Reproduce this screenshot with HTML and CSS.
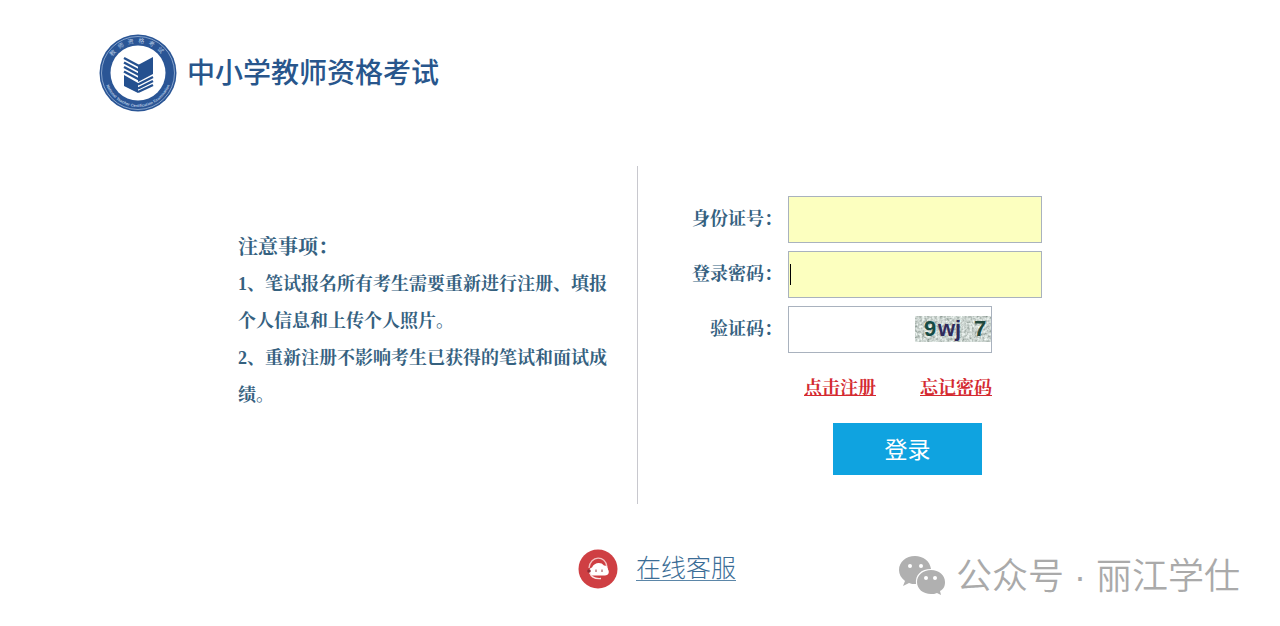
FILE: index.html
```html
<!DOCTYPE html>
<html lang="zh-CN">

<head>
  <meta charset="UTF-8" />
  <meta name="viewport" content="width=device-width, initial-scale=1.0" />
  <title>中小学教师资格考试</title>
  <link rel="stylesheet" href="styles.css">
</head>

<body>
  <header class="header">
    <svg class="logo" viewBox="0 0 78 78" aria-hidden="true">
      <defs>
        <path id="arc-top" d="M9 39a30 30 0 0 1 60 0" />
        <path id="arc-bottom" d="M5 39a34 34 0 0 0 68 0" />
      </defs>
      <circle cx="39" cy="39" r="38.5" fill="#2a5595" />
      <circle cx="39" cy="39" r="36.5" fill="none" stroke="#86a3cb" stroke-width="1" />
      <circle cx="39" cy="39" r="27.5" fill="#fff" />
      <text class="logo-cn"><textPath href="#arc-top" startOffset="50%" text-anchor="middle">教师资格考试</textPath></text>
      <text class="logo-en"><textPath href="#arc-bottom" startOffset="50%" text-anchor="middle">National Teacher Certification Examination</textPath></text>
      <g fill="#24508f">
        <path d="M39 31l15-8v17l-15 8z" />
        <path d="M25 41l14 8v10l-14-7z" />
      </g>
      <g stroke="#24508f" stroke-width="2.4" fill="none">
        <path d="M25 24l15 8M25 28.500l15 8M25 33l15 8M25 37.500l15 8" />
        <path d="M39 50.500l15-7.500M39 54.500l15-7.500M39 58l15-7" />
      </g>
    </svg>
    <h1 class="title">中小学教师资格考试</h1>
  </header>

  <main class="main">
    <section class="notice">
      <div class="notice-text">
        <h2 class="notice-title">注意事项：</h2>
        <p>1、笔试报名所有考生需要重新进行注册、填报个人信息和上传个人照片。</p>
        <p>2、重新注册不影响考生已获得的笔试和面试成绩。</p>
      </div>
    </section>

    <form class="login">
      <div class="row">
        <label class="label" for="idcard">身份证号：</label>
        <input class="input filled" id="idcard" type="text" />
      </div>
      <div class="row">
        <label class="label" for="password">登录密码：</label>
        <div class="field">
          <input class="input filled" id="password" type="password" />
          <span class="caret"></span>
        </div>
      </div>
      <div class="row">
        <label class="label" for="code">验证码：</label>
        <div class="field">
          <input class="input code" id="code" type="text" />
          <svg class="captcha" viewBox="0 0 76 26" role="img" aria-label="验证码">
            <filter id="noise" x="0" y="0" width="1" height="1">
              <feTurbulence type="fractalNoise" baseFrequency="0.4" numOctaves="2" seed="4" />
              <feColorMatrix values="1 0 0 0 0.1  1 0 0 0 0.16  1 0 0 0 0.13  0 0 0 0 1" />
            </filter>
            <rect width="76" height="26" filter="url(#noise)" />
            <text class="captcha-text" x="9" y="20" fill="#164c45">9</text>
            <text class="captcha-text" x="23" y="20" fill="#302b5c">wj</text>
            <text class="captcha-text" x="59" y="20" fill="#20483c">7</text>
          </svg>
        </div>
      </div>
      <div class="links">
        <a href="#">点击注册</a>
        <a href="#">忘记密码</a>
      </div>
      <button class="login-button" type="submit">登录</button>
    </form>
  </main>

  <footer class="footer">
    <div class="service">
      <svg class="service-icon" viewBox="0 0 40 40" aria-hidden="true">
        <circle cx="20" cy="20" r="19.5" fill="#cf3f43" />
        <path d="M11 19c1-13 17-13 18-1" fill="none" stroke="#f3c4c4" stroke-width="1.3" />
        <path d="M14 26.500c-4-1-4-7 0-8c2-5 9-6 12-2c3 0 4 2 4 4c2 3 0 6-3 6z" fill="#fff" />
        <circle cx="11" cy="22" r="1.8" fill="#8f2b35" />
        <path d="M18 20.500v2.500M24 20.500v2.500" stroke="#9c3c43" stroke-width="1" />
        <path d="M12 24c1 4 4 6 11 5.500" fill="none" stroke="#fbe3e3" stroke-width="1.3" />
      </svg>
      <a class="service-link" href="#">在线客服</a>
    </div>
    <div class="account">
      <svg class="wechat" viewBox="0 0 48 40" aria-hidden="true">
        <path fill="#b0b0b0" d="M17 1C8 1 1 7 1 15c0 4 2 8 6 11l-2 5 6-3c2 1 4 1 7 1C17 20 23 14 33 14C32 6 25 1 17 1z" />
        <path fill="#b0b0b0" d="M33 15c-8 0-14 5-14 12s6 12 14 12c2 0 4 0 6-1l4 2-1-4c4-2 5-5 5-9c0-7-6-12-14-12z" />
        <g fill="#fff">
          <circle cx="12" cy="11" r="2" />
          <circle cx="23" cy="11" r="2" />
          <circle cx="28" cy="23" r="2" />
          <circle cx="37" cy="23" r="2" />
        </g>
      </svg>
      <span class="account-name">公众号 · 丽江学仕</span>
    </div>
  </footer>
</body>

</html>
```
FILE: styles.css
```css
* {
  box-sizing: border-box;
}

body {
  margin: 0;
  background-color: #fff;
  color: #35617f;
  font-family: "Liberation Serif", "Noto Serif CJK SC", "Noto Sans CJK SC", serif;
}

h1,
h2,
p {
  margin: 0;
}

/* Header */
.header {
  display: flex;
  align-items: flex-start;
  gap: 10px;
  padding: 34px 99px 0;
}

.logo {
  width: 78px;
  height: 78px;
}

.logo-cn {
  font: 6px "Noto Sans CJK SC", sans-serif;
  letter-spacing: 4px;
  fill: #b5c8e2;
}

.logo-en {
  font: bold 4px "Liberation Sans", sans-serif;
  fill: #b5c8e2;
}

.title {
  margin-top: 17px;
  color: #28568c;
  font-family: "Noto Sans CJK SC", sans-serif;
  font-size: 28px;
  font-weight: 500;
  line-height: 40px;
}

/* Notice and login form */
.main {
  display: grid;
  grid-template-columns: 1fr 1fr;
  margin-top: 54px;
}

.notice {
  display: flex;
  justify-content: flex-end;
  margin-right: 2px;
  padding: 63px 29px 90px;
  border-right: 1px solid #c8c8ce;
}

.notice-text {
  width: 370px;
  font-size: 18px;
  font-weight: bold;
  line-height: 37px;
}

.notice-title {
  font-size: 20px;
}

.login {
  display: flex;
  flex-direction: column;
  gap: 8px;
  padding: 30px 0 0 52px;
}

.row {
  display: flex;
  align-items: center;
  gap: 6px;
}

.label {
  width: 90px;
  padding-bottom: 6px;
  font-size: 18px;
  font-weight: bold;
  text-align: right;
}

.field {
  display: flex;
  position: relative;
}

.input {
  width: 254px;
  height: 47px;
  padding: 0 8px;
  border: 1px solid #a9b2be;
  background-color: #fff;
  font-size: 18px;
  outline: none;
}

.filled {
  background-color: #fcffbf;
}

.code {
  width: 204px;
  padding-right: 80px;
}

.caret {
  position: absolute;
  top: 13px;
  left: 2px;
  width: 1px;
  height: 21px;
  background-color: #000;
}

.captcha {
  position: absolute;
  top: 10px;
  right: 1px;
  width: 76px;
  height: 26px;
}

.captcha-text {
  font: bold 22px "Liberation Sans", sans-serif;
}

.links {
  display: flex;
  gap: 44px;
  margin: 11px 0 0 112px;
  font-size: 18px;
  font-weight: bold;
  line-height: 32px;
}

.links a {
  color: #d42a30;
}

.login-button {
  width: 149px;
  height: 52px;
  margin: 11px 0 0 141px;
  padding: 0 0 3px;
  border: none;
  background-color: #0fa3e0;
  color: #fff;
  font-family: "Noto Sans CJK SC", sans-serif;
  font-size: 23px;
  cursor: pointer;
}

/* Footer */
.footer {
  display: flex;
  justify-content: space-between;
  align-items: flex-start;
  margin-top: 45px;
  padding: 0 40px 0 calc(50% - 62px);
}

.service {
  display: flex;
  align-items: flex-start;
  gap: 18px;
}

.service-icon {
  width: 40px;
  height: 40px;
}

.service-link {
  margin-top: 3px;
  border-bottom: 1px solid #5b86a8;
  color: #3b6d96;
  font-family: "Noto Sans CJK SC", sans-serif;
  font-size: 25px;
  font-weight: 300;
  line-height: 28px;
  text-decoration: none;
}

.account {
  display: flex;
  align-items: center;
  gap: 10px;
  color: #aaa;
  font-family: "Liberation Sans", "Noto Sans CJK SC", sans-serif;
  font-size: 36px;
  font-weight: 350;
  line-height: 48px;
}

.account-name {
  padding-top: 4px;
}

.wechat {
  width: 48px;
  height: 40px;
}
```
